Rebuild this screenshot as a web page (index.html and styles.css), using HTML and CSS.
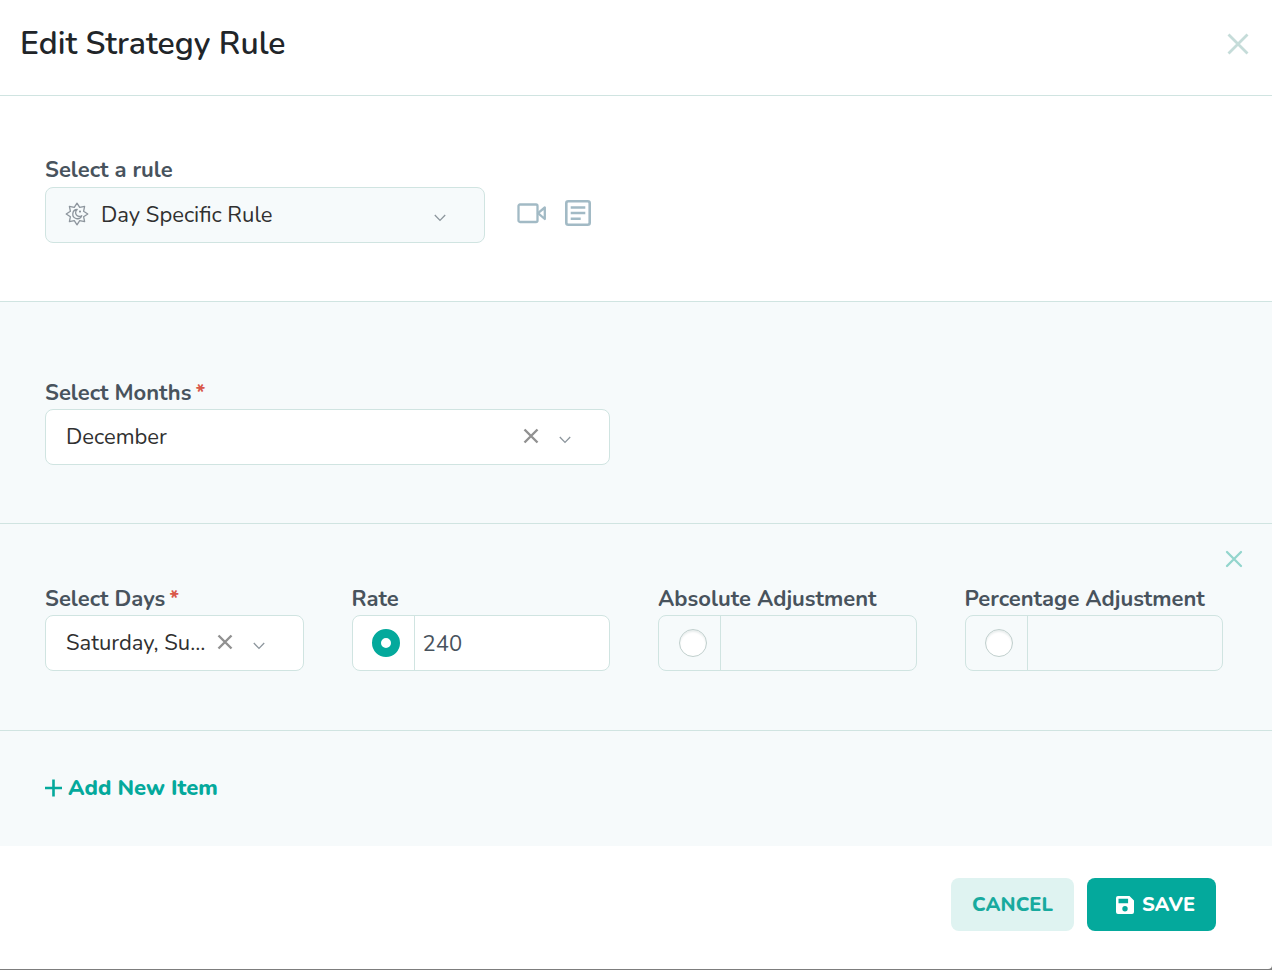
FILE: index.html
```html
<!DOCTYPE html>
<html lang="en">
<head>
<meta charset="utf-8">
<meta name="viewport" content="width=device-width, initial-scale=1">
<title>Edit Strategy Rule</title>
<link rel="stylesheet" href="styles.css">
</head>
<body>
<form class="dialog">
  <header class="dialog-header">
    <h1 class="dialog-title">Edit Strategy Rule</h1>
    <button class="icon-button close" type="button" aria-label="Close">
      <svg width="22" height="22" viewBox="0 0 22 22" fill="none" stroke="currentColor" stroke-width="2.8"><path d="M1.5 1.5l19 19M20.5 1.5l-19 19"/></svg>
    </button>
  </header>

  <section class="section">
    <label class="label" for="rule">Select a rule</label>
    <div class="rule-row">
      <div class="select-box rule-box">
        <svg class="rule-icon" width="24" height="24" viewBox="0 0 24 24" fill="none" stroke="currentColor" stroke-width="1.3" stroke-linejoin="round"><path d="M12 1.2l2.7 4.2 4.9-1-1 4.9 4.2 2.7-4.2 2.7 1 4.9-4.9-1L12 22.8l-2.7-4.2-4.9 1 1-4.9L1.2 12l4.2-2.7-1-4.900 4.900 1z"/><path d="M12.200 7.500a4.600 4.600 0 1 0 4.500 6.200 3.700 3.700 0 0 1-4.500-6.200z"/><path d="M15 8.600v2M14 9.600h2"/></svg>
        <select class="select" id="rule"><option>Day Specific Rule</option></select>
        <svg class="chevron" width="12" height="8" viewBox="0 0 12 8" fill="none" stroke="currentColor" stroke-width="1.3"><path d="M.8 1L6 6.4 11.2 1"/></svg>
      </div>
      <div class="help">
        <button class="icon-button" type="button" aria-label="Watch video">
          <svg width="30" height="22" viewBox="0 0 30 22" fill="none" stroke="currentColor" stroke-width="2.3" stroke-linejoin="round"><rect x="1.5" y="2.5" width="19" height="17.5" rx="1.5"/><path d="M21 11.200l6.800-5.700v11.500z"/></svg>
        </button>
        <button class="icon-button" type="button" aria-label="Read article">
          <svg width="26" height="26" viewBox="0 0 26 26" fill="none" stroke="currentColor" stroke-width="2.6"><rect x="1.3" y="1.3" width="23.4" height="23.4" rx="2"/><path d="M5.700 7.500h14.600M5.700 13h14.600M5.700 18.700h10"/></svg>
        </button>
      </div>
    </div>
  </section>

  <section class="section tinted months">
    <div class="grid">
      <div class="field wide">
        <label class="label" for="months">Select Months<span class="required">*</span></label>
        <div class="select-box">
          <select class="select clearable" id="months"><option>December</option></select>
          <button class="icon-button clear" type="button" aria-label="Clear months"><svg width="16" height="16" viewBox="0 0 16 16" fill="none" stroke="currentColor" stroke-width="2.4"><path d="M1.5 1.5l13 13M14.5 1.5l-13 13"/></svg></button>
          <svg class="chevron" width="12" height="8" viewBox="0 0 12 8" fill="none" stroke="currentColor" stroke-width="1.3"><path d="M.8 1L6 6.4 11.2 1"/></svg>
        </div>
      </div>
    </div>
  </section>

  <section class="section tinted item">
    <button class="icon-button remove" type="button" aria-label="Remove item">
      <svg width="18" height="18" viewBox="0 0 18 18" fill="none" stroke="currentColor" stroke-width="2.3" stroke-linecap="round"><path d="M2 2l14 14M16 2L2 16"/></svg>
    </button>
    <div class="grid">
      <div class="field">
        <label class="label" for="days">Select Days<span class="required">*</span></label>
        <div class="select-box">
          <select class="select clearable" id="days"><option>Saturday, Sunday</option></select>
          <button class="icon-button clear" type="button" aria-label="Clear days"><svg width="16" height="16" viewBox="0 0 16 16" fill="none" stroke="currentColor" stroke-width="2.4"><path d="M1.5 1.5l13 13M14.5 1.5l-13 13"/></svg></button>
          <svg class="chevron" width="12" height="8" viewBox="0 0 12 8" fill="none" stroke="currentColor" stroke-width="1.3"><path d="M.8 1L6 6.4 11.2 1"/></svg>
        </div>
      </div>
      <div class="field">
        <label class="label" for="rate">Rate</label>
        <div class="input-group active">
          <span class="addon"><input class="radio" type="radio" name="mode" aria-label="Use rate" checked></span>
          <input class="input" id="rate" type="text" value="240">
        </div>
      </div>
      <div class="field">
        <label class="label" for="absolute">Absolute Adjustment</label>
        <div class="input-group">
          <span class="addon"><input class="radio" type="radio" name="mode" aria-label="Use absolute adjustment"></span>
          <input class="input" id="absolute" type="text" disabled>
        </div>
      </div>
      <div class="field">
        <label class="label" for="percentage">Percentage Adjustment</label>
        <div class="input-group">
          <span class="addon"><input class="radio" type="radio" name="mode" aria-label="Use percentage adjustment"></span>
          <input class="input" id="percentage" type="text" disabled>
        </div>
      </div>
    </div>
  </section>

  <div class="tinted add-row">
    <button class="add" type="button">
      <svg width="17" height="18" viewBox="0 0 17 18" fill="none" stroke="currentColor" stroke-width="2.6"><path d="M8.500 .5v17M0 9h17"/></svg>Add New Item</button>
  </div>

  <footer class="dialog-footer">
    <button class="button cancel" type="button">CANCEL</button>
    <button class="button save" type="submit">
      <svg width="18" height="18" viewBox="0 0 18 18" fill="currentColor" fill-rule="evenodd"><path d="M2 0h11.500L18 4.500V16a2 2 0 0 1-2 2H2a2 2 0 0 1-2-2V2a2 2 0 0 1 2-2zM2.500 2.700v4.500h9.600V2.700zM9 10a2.700 2.700 0 1 0 0 5.400A2.700 2.700 0 0 0 9 10z"/></svg>SAVE</button>
  </footer>
</form>
</body>
</html>
```
FILE: styles.css
```css
* {
  box-sizing: border-box;
}

body {
  margin: 0;
  background: #7d7d7d;
  color: #212529;
  font: 22px/28px Nunito, Lato, sans-serif;
}

button,
input,
select {
  font: inherit;
}

button {
  cursor: pointer;
}

svg {
  display: block;
  flex: none;
}

.dialog {
  margin-bottom: 1px;
  background: #fff;
  border-bottom-right-radius: 4px;
}

.dialog-header {
  display: flex;
  align-items: center;
  justify-content: space-between;
  padding: 22px 23px 29px 20px;
  border-bottom: 1px solid #d0e4e1;
}

.dialog-title {
  margin: 0;
  font-size: 32px;
  line-height: 44px;
  font-weight: 600;
}

.icon-button {
  padding: 0;
  border: 0;
  background: none;
  color: #a2bac5;
}

.close {
  color: #c5dcd9;
}

.section {
  padding: 60px 49px 58px 45px;
  border-bottom: 1px solid #d0e4e1;
}

.tinted {
  background: #f6fafb;
}

.months {
  padding-top: 77px;
}

.item {
  position: relative;
  padding-top: 61px;
  padding-bottom: 59px;
}

.tinted .label {
  margin-bottom: 2px;
}

.remove {
  position: absolute;
  top: 26px;
  right: 29px;
  color: #93d5cd;
}

.grid {
  display: grid;
  grid-template-columns: repeat(4, minmax(0, 1fr));
  gap: 48px;
}

.wide {
  grid-column: span 2;
}

.label {
  display: block;
  margin-bottom: 3px;
  color: #48535d;
  font-weight: 700;
}

.required {
  margin-left: 4px;
  color: #d9574a;
}

.rule-row {
  display: flex;
  align-items: center;
  gap: 32px;
}

.rule-box {
  flex: 0 1 440px;
}

.rule-icon {
  position: absolute;
  top: 15px;
  left: 20px;
  color: #8d959d;
}

.help {
  display: flex;
  align-items: center;
  gap: 18px;
  padding-bottom: 4px;
}

.select-box {
  position: relative;
  color: #8c959c;
}

.select {
  display: block;
  appearance: none;
  width: 100%;
  height: 56px;
  padding: 0 60px 0 20px;
  border: 1px solid #d0e4e1;
  border-radius: 8px;
  background: #fff;
  color: #303030;
  text-overflow: ellipsis;
}

.rule-box .select {
  padding-left: 55px;
  background: #f6fafb;
}

.select.clearable {
  padding-right: 90px;
}

.clear {
  position: absolute;
  top: 19px;
  right: 71px;
  color: #919191;
}

.chevron {
  position: absolute;
  top: 27px;
  right: 39px;
  pointer-events: none;
}

.input-group {
  display: flex;
  height: 56px;
  overflow: hidden;
  border: 1px solid #d0e4e1;
  border-radius: 8px;
}

.active {
  background: #fff;
}

.addon {
  display: flex;
  align-items: center;
  justify-content: center;
  flex: 0 0 62px;
  padding-left: 6px;
  border-right: 1px solid #d0e4e1;
}

.radio {
  appearance: none;
  width: 28px;
  height: 28px;
  margin: 0;
  border: 1px solid #c0cfcd;
  border-radius: 50%;
  background: #fff;
  box-shadow: inset 0 2px 2px #eaeeee;
}

.radio:checked {
  border: 9px solid #04a99c;
  box-shadow: none;
}

.input {
  flex: 1;
  min-width: 0;
  padding: 2px 8px 0;
  border: 0;
  background: none;
  color: #48535d;
}

.add-row {
  padding: 43px 45px 44px;
}

.add {
  display: flex;
  align-items: center;
  gap: 6px;
  padding: 0;
  border: 0;
  background: none;
  color: #04a99c;
  font-weight: 800;
}

.dialog-footer {
  display: flex;
  justify-content: flex-end;
  gap: 13px;
  padding: 32px 56px 38px;
}

.button {
  display: flex;
  align-items: center;
  justify-content: center;
  gap: 8px;
  height: 53px;
  border: 0;
  border-radius: 8px;
  font-size: 20px;
  font-weight: 800;
}

.cancel {
  min-width: 123px;
  background: #dff3f1;
  color: #18aa9e;
}

.save {
  min-width: 129px;
  padding: 0 20px 0 28px;
  background: #04a99c;
  color: #fff;
}
```
